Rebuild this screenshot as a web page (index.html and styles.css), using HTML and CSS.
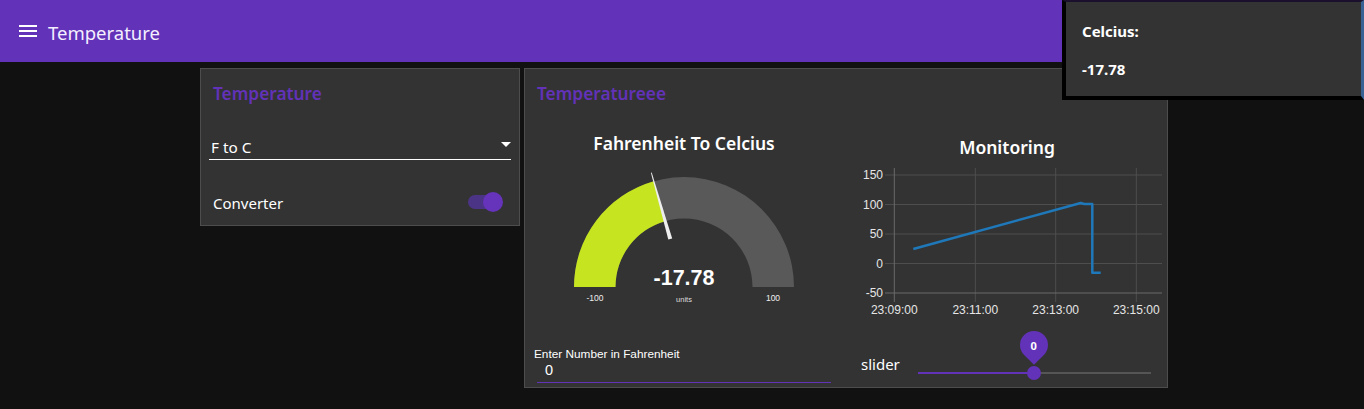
FILE: index.html
```html
<!DOCTYPE html>
<html lang="en">
<head>
<meta charset="utf-8">
<title>Temperature</title>
<link rel="stylesheet" href="styles.css">
</head>
<body>
<header class="topbar">
  <svg class="menu-icon" width="18" height="14" viewBox="0 0 18 14" aria-hidden="true">
    <rect x="0" y="0" width="18" height="2"/>
    <rect x="0" y="5" width="18" height="2"/>
    <rect x="0" y="10" width="18" height="2"/>
  </svg>
  <span class="page-title">Temperature</span>
</header>

<main class="content">
  <section class="card card-small">
    <h2 class="card-title">Temperature</h2>
    <div class="dropdown">
      <span class="dropdown-value">F to C</span>
      <span class="caret"></span>
    </div>
    <div class="switch-row">
      <span class="switch-label">Converter</span>
      <span class="switch"><span class="switch-thumb"></span></span>
    </div>
  </section>

  <section class="card card-large">
    <h2 class="card-title">Temperatureee</h2>
    <div class="widgets">
      <div class="widget gauge">
        <div class="widget-title">Fahrenheit To Celcius</div>
        <svg class="gauge-svg" width="308" height="160" viewBox="0 0 308 160">
          <path class="gauge-track" d="M 44 132 A 110 110 0 0 1 264 132 L 222.5 132 A 68.5 68.5 0 0 0 85.5 132 Z"/>
          <path class="gauge-fill" d="M 44 132 A 110 110 0 0 1 123.68 26.26 L 135.12 66.15 A 68.5 68.5 0 0 0 85.5 132 Z"/>
          <polygon class="gauge-needle" points="121.7,17.4 142.2,83.4 138.3,84.5 120.9,17.7"/>
          <text class="gauge-value" x="154" y="130" text-anchor="middle">-17.78</text>
          <text class="gauge-units" x="154" y="147" text-anchor="middle">units</text>
          <text class="gauge-limit" x="65" y="146" text-anchor="middle">-100</text>
          <text class="gauge-limit" x="243" y="146" text-anchor="middle">100</text>
        </svg>
      </div>

      <div class="widget chart">
        <div class="widget-title">Monitoring</div>
        <svg class="chart-svg" width="318" height="170" viewBox="0 0 318 170">
          <g class="grid">
            <line x1="37" y1="16" x2="314" y2="16"/>
            <line x1="37" y1="45.5" x2="314" y2="45.5"/>
            <line x1="37" y1="75" x2="314" y2="75"/>
            <line x1="37" y1="104.5" x2="314" y2="104.5"/>
            <line x1="127.3" y1="9" x2="127.3" y2="143"/>
            <line x1="207.7" y1="9" x2="207.7" y2="143"/>
            <line x1="288.3" y1="9" x2="288.3" y2="143"/>
          </g>
          <g class="axis">
            <line x1="37" y1="134" x2="314" y2="134"/>
            <line x1="46.3" y1="9" x2="46.3" y2="143"/>
          </g>
          <g class="ticks-y">
            <text x="35" y="20" text-anchor="end">150</text>
            <text x="35" y="49.5" text-anchor="end">100</text>
            <text x="35" y="79" text-anchor="end">50</text>
            <text x="35" y="108.5" text-anchor="end">0</text>
            <text x="35" y="138" text-anchor="end">-50</text>
          </g>
          <g class="ticks-x">
            <text x="46.3" y="155" text-anchor="middle">23:09:00</text>
            <text x="127.3" y="155" text-anchor="middle">23:11:00</text>
            <text x="207.7" y="155" text-anchor="middle">23:13:00</text>
            <text x="288.3" y="155" text-anchor="middle">23:15:00</text>
          </g>
          <polyline class="series" points="65.3,90 232.7,44 236.3,45 244.3,45 244.3,113.7 252.7,113.7"/>
        </svg>
      </div>

      <div class="widget text-input">
        <label class="input-label">Enter Number in Fahrenheit</label>
        <div class="input-box"><span class="input-value">0</span></div>
      </div>

      <div class="widget slider">
        <span class="slider-label">slider</span>
        <div class="slider-track">
          <span class="slider-fill"></span>
          <span class="slider-thumb"></span>
          <span class="slider-pin"><span class="slider-pin-text">0</span></span>
        </div>
      </div>
    </div>
  </section>
</main>

<div class="toast">
  <div class="toast-title">Celcius:</div>
  <div class="toast-body">-17.78</div>
</div>
</body>
</html>
```

FILE: styles.css
```css
* { box-sizing: border-box; }

html, body {
  margin: 0;
  padding: 0;
  background: #111111;
  font-family: "Noto Sans", "Open Sans", sans-serif;
  color: #ffffff;
  overflow: hidden;
}

body {
  position: relative;
  width: 1364px;
  height: 409px;
}

.topbar {
  height: 62px;
  background: #6232b8;
  display: flex;
  align-items: center;
  padding-left: 19px;
}

.menu-icon {
  fill: #ffffff;
  margin-top: 2px;
}

.page-title {
  margin-left: 11px;
  margin-top: 2px;
  font-size: 18.5px;
  color: #f4efff;
}

.content {
  display: flex;
  align-items: flex-start;
  gap: 4px;
  padding: 6px 0 0 200px;
}

.card {
  background: #333333;
  border: 1px solid #4d4d4d;
}

.card-small {
  width: 320px;
  height: 158px;
}

.card-large {
  width: 644px;
  height: 320px;
}

.card-title {
  margin: 0;
  height: 50px;
  line-height: 50px;
  padding-left: 12px;
  font-size: 17.3px;
  font-weight: 600;
  color: #6232b8;
}

.dropdown {
  margin: 16px 8px 0 8px;
  height: 25px;
  border-bottom: 1px solid #ffffff;
  display: flex;
  align-items: center;
  justify-content: space-between;
  padding: 0 0 1px 2px;
}

.dropdown-value {
  font-size: 15.3px;
  color: #ffffff;
}

.caret {
  width: 0;
  height: 0;
  border-left: 5px solid transparent;
  border-right: 5px solid transparent;
  border-top: 5px solid #ffffff;
  margin-top: -5px;
}

.switch-row {
  height: 36px;
  margin-top: 25px;
  display: flex;
  align-items: center;
  justify-content: space-between;
  padding: 0 16px 0 12px;
}

.switch-label {
  font-size: 15px;
  margin-top: -1px;
}

.switch {
  position: relative;
  width: 29px;
  height: 14px;
  border-radius: 7px;
  background: #4b3485;
  margin-right: 6px;
  margin-top: -2px;
}

.switch-thumb {
  position: absolute;
  width: 20px;
  height: 20px;
  border-radius: 50%;
  background: #6633bb;
  top: -3px;
  right: -6px;
}

.widgets {
  display: grid;
  grid-template-columns: 308px 318px;
  grid-template-rows: 211px 57px;
  column-gap: 10px;
  padding-left: 5px;
}

.widget-title {
  text-align: center;
  font-size: 17px;
  font-weight: 600;
  line-height: 24px;
  color: #ffffff;
}

.gauge .widget-title {
  margin-top: 12px;
  font-size: 17.5px;
}

.gauge-svg {
  display: block;
}

.gauge-track { fill: #595959; }
.gauge-fill { fill: #c6e520; }
.gauge-needle { fill: #eeeeee; }

.gauge-value {
  font-family: "Liberation Sans", Arial, sans-serif;
  font-size: 21.5px;
  font-weight: 700;
  fill: #ffffff;
}

.gauge-units {
  font-family: "Liberation Sans", Arial, sans-serif;
  font-size: 7.5px;
  fill: #dddddd;
}

.gauge-limit {
  font-family: "Liberation Sans", Arial, sans-serif;
  font-size: 8.5px;
  fill: #eeeeee;
}

.chart .widget-title {
  margin-top: 16px;
  font-size: 17.5px;
}

.chart-svg {
  display: block;
}

.grid line {
  stroke: #4e4e4e;
  stroke-width: 1;
}

.axis line {
  stroke: #6a6a6a;
  stroke-width: 1;
}

.ticks-y text,
.ticks-x text {
  font-family: "Liberation Sans", Arial, sans-serif;
  font-size: 12px;
  fill: #e6e6e6;
}

.series {
  fill: none;
  stroke: #1f78b9;
  stroke-width: 2.5;
  stroke-linejoin: round;
}

.text-input {
  padding-top: 18px;
}

.input-label {
  display: block;
  margin-left: 4px;
  font-family: "Liberation Sans", Arial, sans-serif;
  font-size: 11.8px;
  line-height: 13px;
  color: #ffffff;
}

.input-box {
  margin: 0 7px;
  height: 22px;
  border-bottom: 1.5px solid #6232b8;
  padding-left: 8px;
  padding-top: 1px;
  line-height: 15px;
}

.input-value {
  font-family: "Liberation Sans", Arial, sans-serif;
  font-size: 14.5px;
}

.slider {
  display: flex;
  align-items: center;
  padding-left: 13px;
  padding-top: 10px;
}

.slider-label {
  font-size: 15px;
  width: 57px;
}

.slider-track {
  position: relative;
  width: 233px;
  height: 2px;
  background: #555555;
  margin-top: 18px;
}

.slider-fill {
  position: absolute;
  left: 0;
  top: 0;
  height: 2px;
  width: 116px;
  background: #6232b8;
}

.slider-thumb {
  position: absolute;
  left: 109px;
  top: -6px;
  width: 14px;
  height: 14px;
  border-radius: 50%;
  background: #6232b8;
}

.slider-pin {
  position: absolute;
  left: 102px;
  top: -41px;
  width: 28px;
  height: 28px;
  border-radius: 50% 50% 0 50%;
  transform: rotate(45deg);
  background: #6232b8;
  display: flex;
  align-items: center;
  justify-content: center;
}

.slider-pin-text {
  transform: rotate(-45deg);
  font-size: 11px;
  font-weight: 700;
  color: #ffffff;
}

.toast {
  position: absolute;
  top: 0;
  right: 0;
  width: 302px;
  height: 100px;
  background: #333333;
  border-left: 4px solid #000000;
  border-top: 2px solid #1a0f2c;
  border-bottom: 4px solid #000000;
  border-right: 3px solid #3a6194;
  padding: 19px 0 0 16px;
  font-weight: 700;
  font-size: 15px;
}

.toast-title {
  line-height: 20px;
}

.toast-body {
  line-height: 20px;
  margin-top: 18px;
}
```
